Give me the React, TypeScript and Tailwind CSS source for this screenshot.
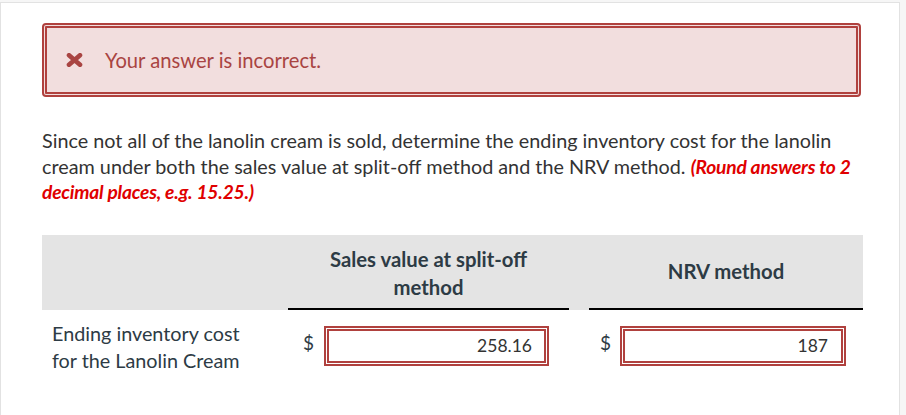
import React from "react";

function XIcon() {
  return (
    <svg width="17" height="14" viewBox="0 0 17 14" className="shrink-0">
      <path d="M3 2.2 L14 11.8 M14 2.2 L3 11.8" stroke="#a94442" strokeWidth="4.6" strokeLinecap="round" />
    </svg>
  );
}

function AnswerBox({ value, width, pr }: { value: string; width: string; pr: string }) {
  return (
    <div className={`h-[40px] ${width} border-[5px] border-double border-[#b0413e] bg-white flex items-center justify-end ${pr} text-[17.5px] text-[#333] pt-[2px]`}>
      {value}
    </div>
  );
}

export default function App() {
  return (
    <div className="w-[906px] h-[415px] bg-[#f6f6f6] pt-[2px] overflow-hidden" style={{ fontFamily: "Lato, 'Open Sans', sans-serif" }}>
      <div className="w-[900px] h-[413px] bg-white border-t border-r border-l border-[#e2e2e2] pl-[41px] pt-[20px]">
        <div className="w-[819px] h-[74px] border-[5px] border-double border-[#b0413e] rounded-[4px] bg-[#f2dede] flex items-center pl-[19px] gap-[22px]">
          <XIcon />
          <span className="text-[20.2px] text-[#a94442]">Your answer is incorrect.</span>
        </div>

        <p className="mt-[31px] w-[820px] text-[19.8px] leading-[25.5px] text-[#333]">
          Since not all of the lanolin cream is sold, determine the ending inventory cost for the lanolin cream under both the sales value at split-off method and the NRV method.{" "}
          <span className="font-bold italic text-[#e00000] text-[19.2px] tracking-[-0.2px]">(Round answers to 2 decimal places, e.g. 15.25.)</span>
        </p>

        <div className="mt-[30px] w-[821px] grid grid-cols-[246px_281px_20px_274px]">
          <div className="bg-[#e4e4e4] h-[75px]" />
          <div className="bg-[#e4e4e4] h-[75px] border-b-2 border-black flex items-start justify-center pt-[10px] text-center text-[20.3px] font-bold leading-[28px] text-[#2d3b45]">
            <span>Sales value at split-off<br />method</span>
          </div>
          <div className="bg-[#e4e4e4] h-[75px]" />
          <div className="bg-[#e4e4e4] h-[75px] border-b-2 border-black flex items-center justify-center text-[20.3px] font-bold text-[#2d3b45] pt-[1px]">
            NRV method
          </div>

          <div className="pl-[10px] pt-[10px] text-[19.8px] leading-[27px] text-[#2d3b45]">
            Ending inventory cost<br />for the Lanolin Cream
          </div>
          <div className="flex items-center pt-[16px] pl-[15px] self-start">
            <span className="w-[21px] text-[19px] text-[#2d3b45] -mt-[5px]">$</span>
            <AnswerBox value="258.16" width="w-[225px]" pr="pr-[12px]" />
          </div>
          <div />
          <div className="flex items-center pt-[16px] pl-[11px] self-start">
            <span className="w-[20px] text-[19px] text-[#2d3b45] -mt-[5px]">$</span>
            <AnswerBox value="187" width="w-[226px]" pr="pr-[13px]" />
          </div>
        </div>
      </div>
    </div>
  );
}
